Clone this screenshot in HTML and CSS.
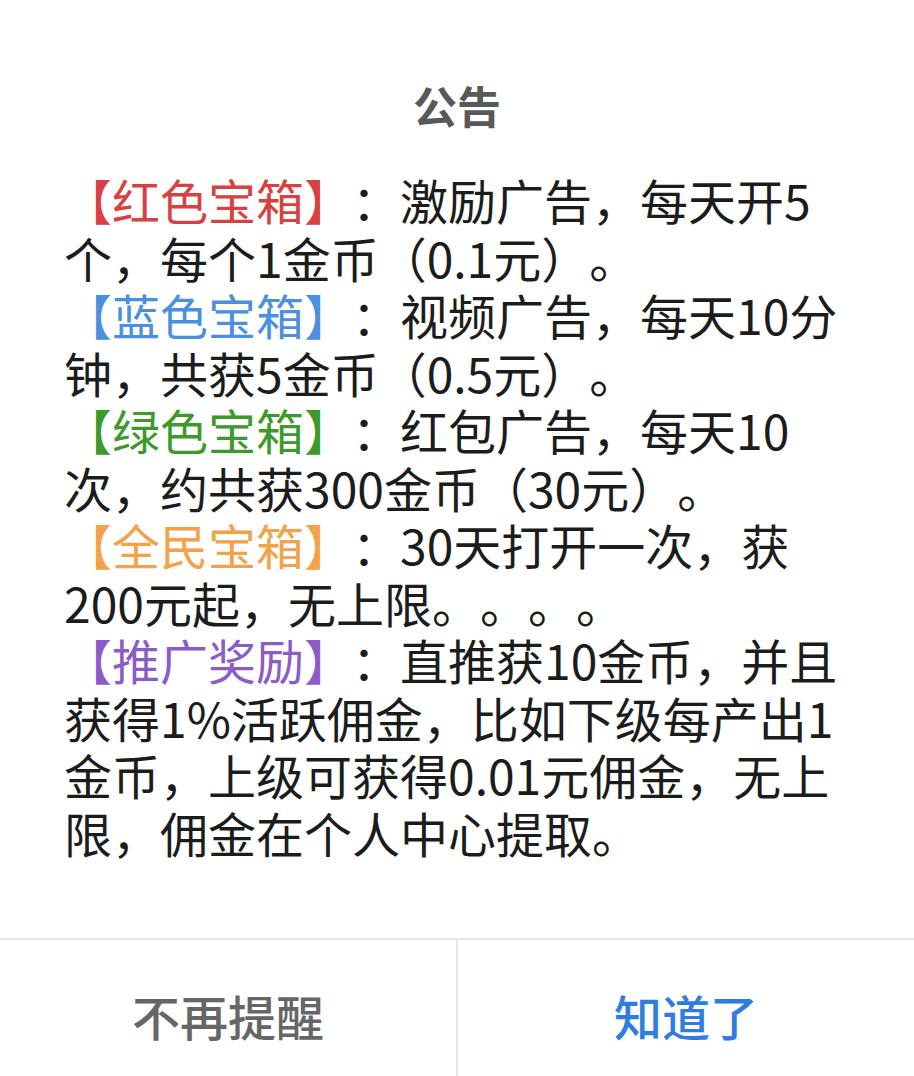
FILE: index.html
```html
<!DOCTYPE html>
<html lang="zh-CN">
<head>
    <meta charset="UTF-8">
    <meta name="viewport" content="width=device-width, initial-scale=1.0">
    <title>公告</title>
    <link rel="stylesheet" href="styles.css">
</head>
<body>
<div class="dialog">
    <div class="dialog-title">公告</div>
    <div class="dialog-content">
        <p><span class="tag red">【红色宝箱】</span>：激励广告，每天开5个，每个1金币（0.1元）。</p>
        <p><span class="tag blue">【蓝色宝箱】</span>：视频广告，每天10分钟，共获5金币（0.5元）。</p>
        <p><span class="tag green">【绿色宝箱】</span>：红包广告，每天10<br>次，约共获300金币（30元）。</p>
        <p><span class="tag orange">【全民宝箱】</span>：30天打开一次，获200元起，无上限。。。。</p>
        <p><span class="tag purple">【推广奖励】</span>：直推获10金币，并且获得1%活跃佣金，比如下级每产出1金币，上级可获得0.01元佣金，无上限，佣金在个人中心提取。</p>
    </div>
    <div class="dialog-footer">
        <div class="btn btn-cancel">不再提醒</div>
        <div class="btn btn-ok">知道了</div>
    </div>
</div>
</body>
</html>
```

FILE: styles.css
```css
* {
    box-sizing: border-box;
}

body {
    margin: 0;
    background-color: #ffffff;
    font-family: "Noto Sans CJK SC", sans-serif;
    text-spacing-trim: space-all;
}

.dialog {
    height: 100vh;
    display: flex;
    flex-direction: column;
}

.dialog-title {
    padding-top: 74px;
    font-size: 44px;
    line-height: 62px;
    font-weight: bold;
    color: #595959;
    text-align: center;
}

.dialog-content {
    padding: 35px 64px 0 64px;
    font-size: 48px;
    line-height: 57.5px;
    color: #1c1c1c;
}

.dialog-content p {
    margin: 0;
}

.tag.red {
    color: #d8413f;
}

.tag.blue {
    color: #4a8fe0;
}

.tag.green {
    color: #3c9a2a;
}

.tag.orange {
    color: #f4a24a;
}

.tag.purple {
    color: #8b5cc8;
}

.dialog-footer {
    margin-top: auto;
    height: 138px;
    display: flex;
    border-top: 2px solid #e6e6e6;
}

.btn {
    flex: 1;
    display: flex;
    align-items: center;
    justify-content: center;
    padding-top: 14px;
    font-size: 48px;
    font-weight: 500;
}

.btn-cancel {
    color: #666666;
    border-right: 2px solid #e6e6e6;
}

.btn-ok {
    color: #2f7de0;
}
```
